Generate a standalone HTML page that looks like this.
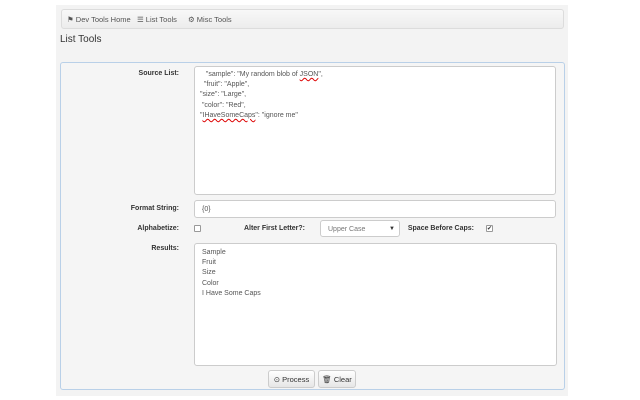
<!DOCTYPE html>
<html><head><style>
*{box-sizing:border-box}
body{margin:0;width:640px;height:400px;background:#fff;font-family:"Liberation Sans",sans-serif;font-size:7.5px;color:#333;position:relative;overflow:hidden}
.wrap{position:absolute;left:56px;top:5px;width:512px;height:391px;background:#f3f3f3}
.nav{position:absolute;left:61px;top:9px;width:503px;height:20px;background:linear-gradient(#f8f8f8,#ececec);border:1px solid #dcdcdc;border-radius:3px}
.nav span{position:absolute;top:5px;font-size:7.5px;color:#555}
h1{position:absolute;left:60px;top:34px;margin:0;font-size:10px;font-weight:normal;color:#333}
.panel{position:absolute;left:60px;top:62px;width:505px;height:328px;border:1px solid #b9d0e8;border-radius:3px;background:#f5f5f5}
.lbl{position:absolute;font-weight:bold;font-size:7px;color:#333;text-align:right}
.box{position:absolute;background:#fff;border:1px solid #ccc;border-radius:3px;font-size:7px;color:#555;line-height:10.2px;padding:3px 7px}
.cb{position:absolute;width:7px;height:7px;border:1px solid #999;background:#fff;border-radius:1px}
.btn{position:absolute;top:370px;height:18px;border:1px solid #ccc;border-radius:3px;background:linear-gradient(#fff,#e6e6e6);font-size:7.5px;color:#333;padding-top:4px;text-align:center}
u{text-decoration:underline wavy #d00;text-decoration-thickness:1px}
</style></head><body>
<div class="wrap"></div>
<div class="nav">
<span style="left:5px">&#9873; Dev Tools Home</span>
<span style="left:75px">&#9776; List Tools</span>
<span style="left:126px">&#9881; Misc Tools</span>
</div>
<h1>List Tools</h1>
<div class="panel"></div>
<div class="lbl" style="left:100px;top:70px;width:79px">Source List:</div>
<div class="box" style="left:194px;top:66px;width:362px;height:129px;padding-left:5px">&nbsp;&nbsp;&nbsp;"sample": "My random blob of <u>JSON</u>",<br>&nbsp;&nbsp;"fruit": "Apple",<br>"size": "Large",<br>&nbsp;"color": "Red",<br>"<u>IHaveSomeCaps</u>": "ignore me"</div>
<div class="lbl" style="left:100px;top:205px;width:79px">Format String:</div>
<div class="box" style="left:194px;top:200px;width:362px;height:18px;padding-top:4px">{0}</div>
<div class="lbl" style="left:100px;top:225px;width:79px">Alphabetize:</div>
<div class="cb" style="left:194px;top:225px"></div>
<div class="lbl" style="left:230px;top:225px;width:75px">Alter First Letter?:</div>
<div class="box" style="left:320px;top:220px;width:80px;height:17px;padding-top:4px;color:#777">Upper Case<span style="position:absolute;right:4px;top:3px;font-size:6px;color:#333">&#9660;</span></div>
<div class="lbl" style="left:400px;top:225px;width:74px">Space Before Caps:</div>
<div class="cb" style="left:486px;top:225px;font-size:6px;line-height:6px;text-align:center">&#10004;</div>
<div class="lbl" style="left:100px;top:245px;width:79px">Results:</div>
<div class="box" style="left:194px;top:243px;width:363px;height:123px;padding-top:4px">Sample<br>Fruit<br>Size<br>Color<br>I Have Some Caps</div>
<div class="btn" style="left:268px;width:47px">&#8857; Process</div>
<div class="btn" style="left:318px;width:38px">&#128465; Clear</div>
</body></html>
